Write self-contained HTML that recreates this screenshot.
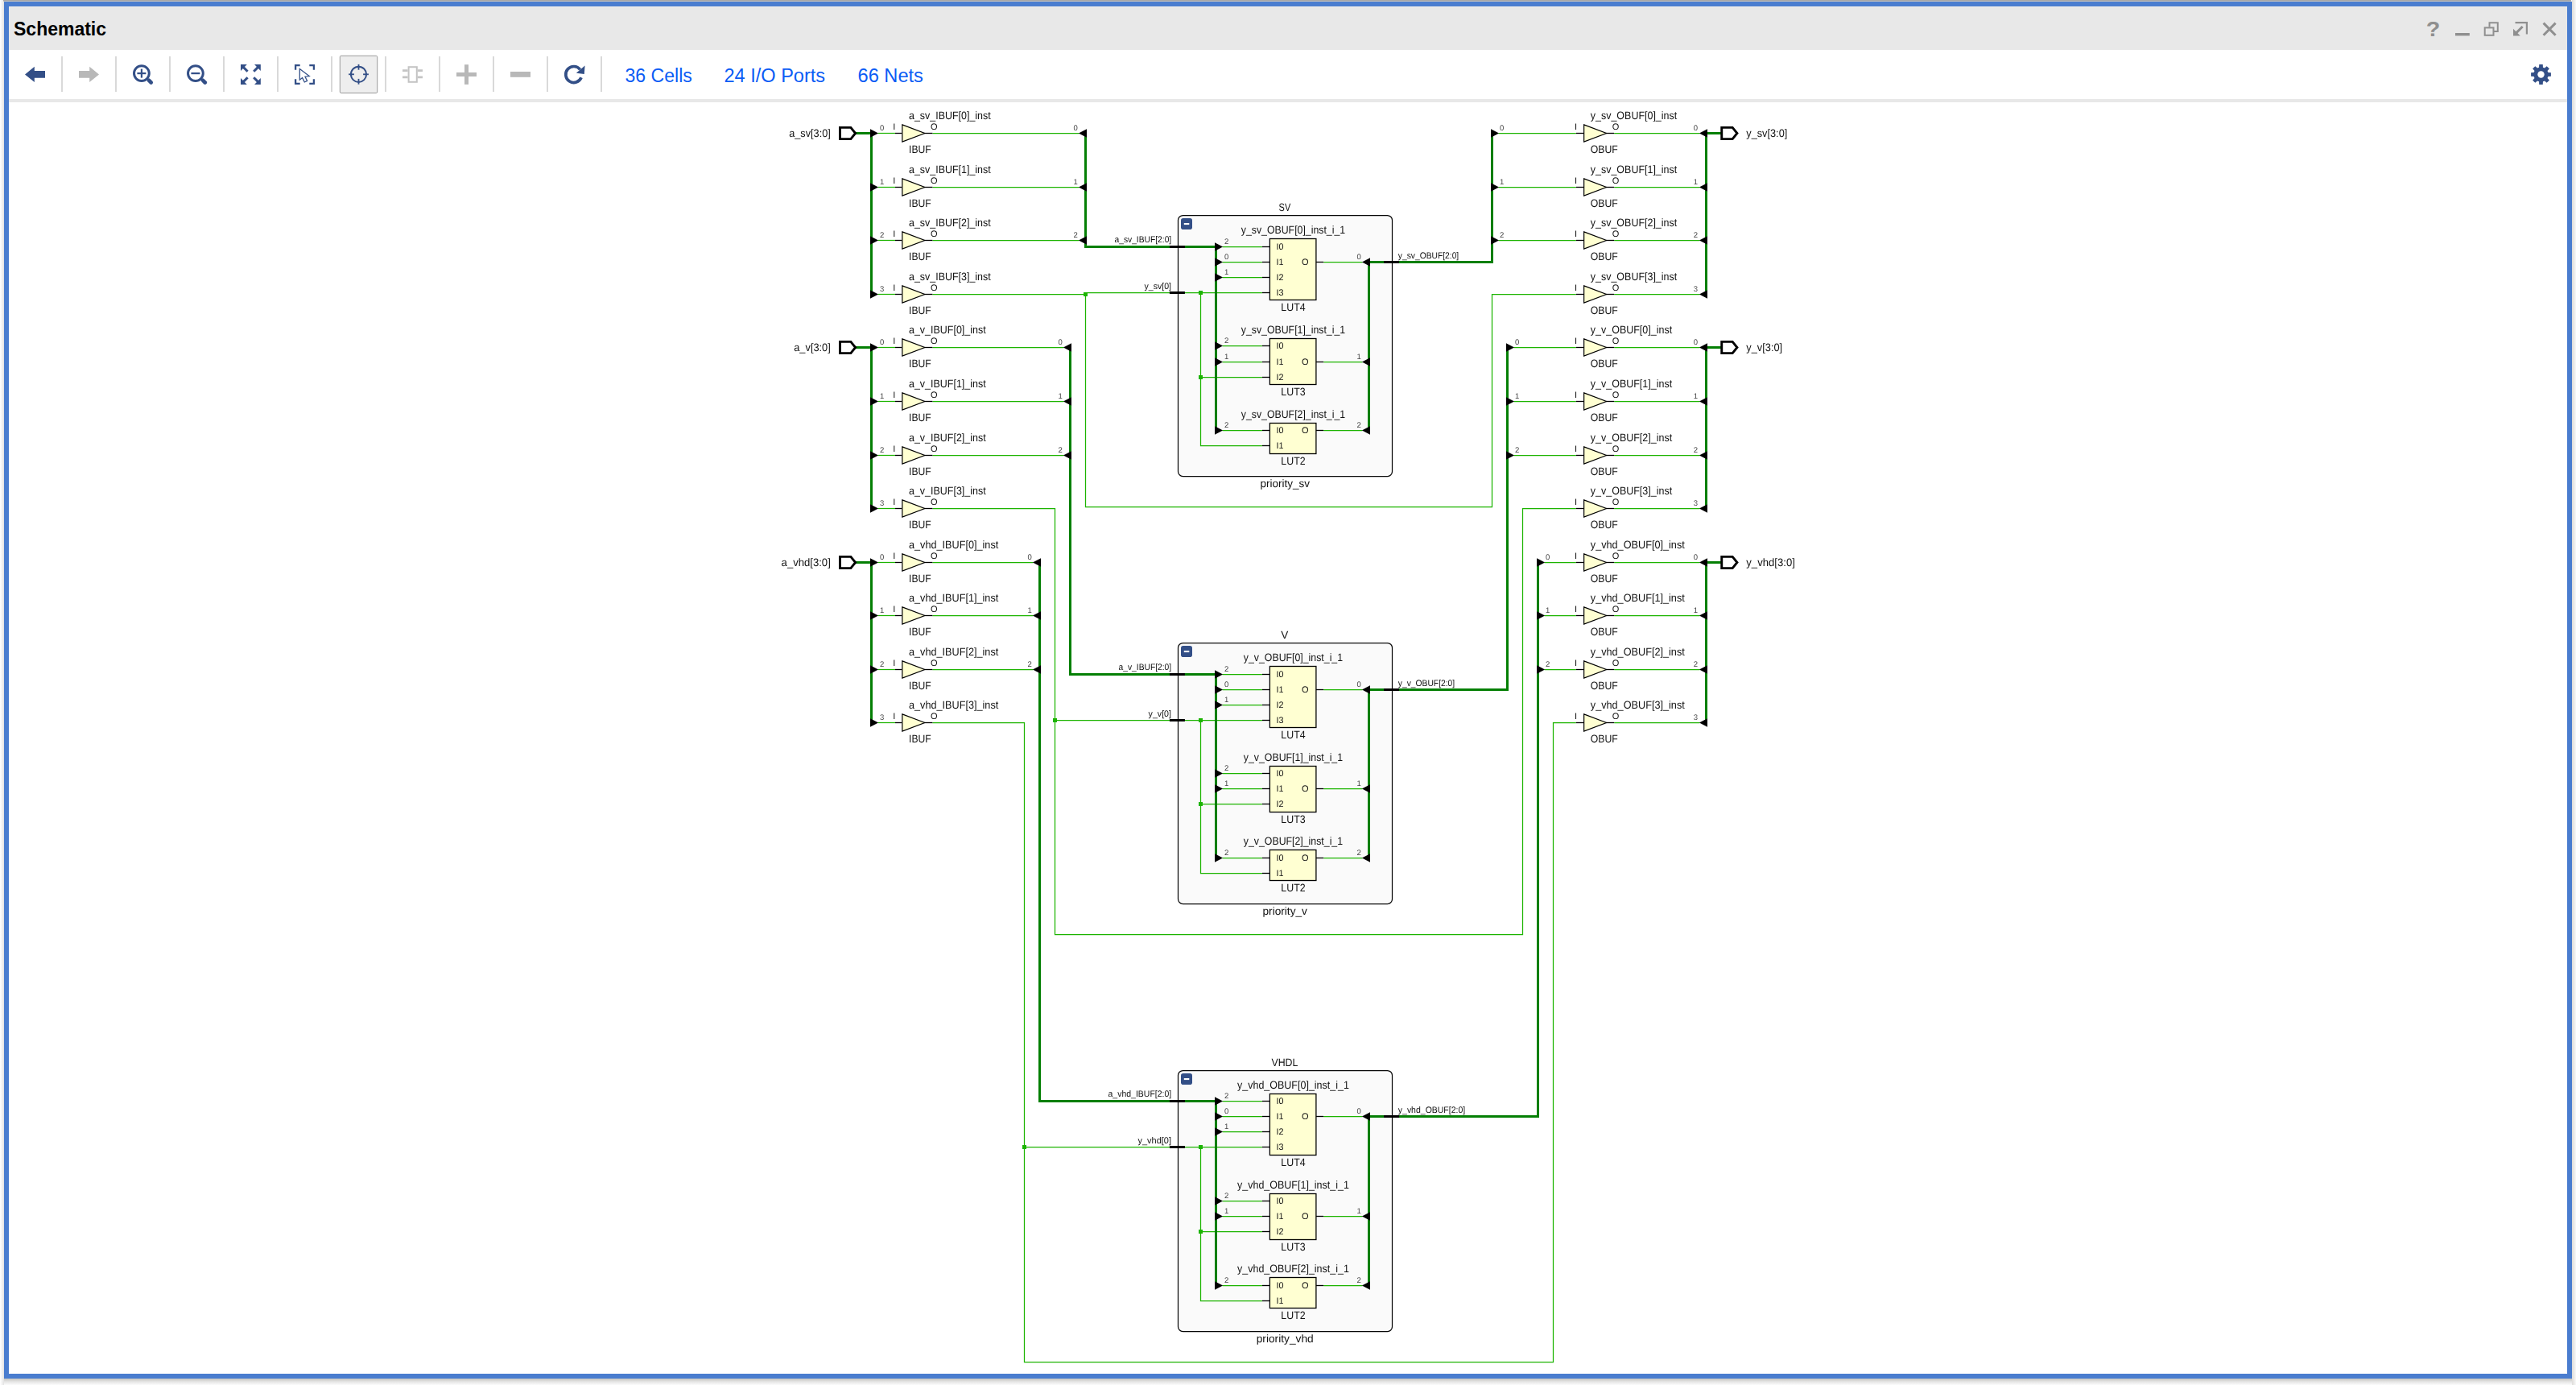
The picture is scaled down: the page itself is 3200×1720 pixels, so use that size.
<!DOCTYPE html>
<html><head><meta charset="utf-8"><title>Schematic</title>
<style>
html,body{margin:0;padding:0;background:#fff;}
body{width:3200px;height:1720px;overflow:hidden;}
svg{display:block;position:absolute;left:0;top:0;}
#sch{will-change:transform;}
#sch text{text-rendering:geometricPrecision;}
svg text{font-family:"Liberation Sans",sans-serif;}
</style></head>
<body>
<svg width="3200" height="1720" viewBox="0 0 3200 1720">
<g id="chrome">
<defs><linearGradient id="gl" x1="0" x2="1" y1="0" y2="0"><stop offset="0" stop-color="#ffffff"/><stop offset="0.5" stop-color="#f2f2f2"/><stop offset="1" stop-color="#e2e2e2"/></linearGradient><linearGradient id="gr" x1="0" x2="1" y1="0" y2="0"><stop offset="0" stop-color="#dedcd9"/><stop offset="1" stop-color="#f8f8f8"/></linearGradient><linearGradient id="gb" x1="0" x2="0" y1="0" y2="1"><stop offset="0" stop-color="#c6c4c0"/><stop offset="0.5" stop-color="#e6e6e6"/><stop offset="1" stop-color="#fbfbfb"/></linearGradient></defs>
<rect x="0" y="0" width="3200" height="1720" fill="#f8f8f8"/>
<rect x="0" y="0" width="5" height="1720" fill="url(#gl)"/>
<rect x="3195" y="0" width="5" height="1720" fill="url(#gr)"/>
<rect x="5" y="1712" width="3190" height="8" fill="url(#gb)"/>
<rect x="4" y="0" width="3190" height="1" fill="#a6a6a6"/>
<rect x="4" y="1" width="3190" height="1" fill="#c4c2bd"/>
<rect x="5" y="2" width="3190" height="1710" fill="#4a7dcf"/>
<rect x="11" y="8" width="3178" height="1698" fill="#ffffff"/>
<rect x="11" y="8" width="3178" height="54" fill="#e8e8e8"/>
<rect x="11" y="8" width="3178" height="1" fill="#f4f1ec"/>
<rect x="11" y="123" width="3178" height="4" fill="#e8e8e8"/>
<text x="17" y="43.5" font-size="23" font-weight="bold" fill="#000">Schematic</text>
<rect x="76.0" y="70" width="2" height="44" fill="#d9d9d9"/>
<rect x="143.0" y="70" width="2" height="44" fill="#d9d9d9"/>
<rect x="210.0" y="70" width="2" height="44" fill="#d9d9d9"/>
<rect x="277.0" y="70" width="2" height="44" fill="#d9d9d9"/>
<rect x="344.0" y="70" width="2" height="44" fill="#d9d9d9"/>
<rect x="411.0" y="70" width="2" height="44" fill="#d9d9d9"/>
<rect x="478.0" y="70" width="2" height="44" fill="#d9d9d9"/>
<rect x="545.0" y="70" width="2" height="44" fill="#d9d9d9"/>
<rect x="612.0" y="70" width="2" height="44" fill="#d9d9d9"/>
<rect x="679.0" y="70" width="2" height="44" fill="#d9d9d9"/>
<rect x="746.0" y="70" width="2" height="44" fill="#d9d9d9"/>
<path d="M31,92.4L42.8,82.80000000000001L42.8,88.0L56,88.0L56,96.80000000000001L42.8,96.80000000000001L42.8,102.0Z" fill="#334f87"/>
<path d="M123,92.4L111.2,82.80000000000001L111.2,88.0L98,88.0L98,96.80000000000001L111.2,96.80000000000001L111.2,102.0Z" fill="#b8b8b8"/>
<circle cx="175.9" cy="91.1" r="9.4" fill="none" stroke="#334f87" stroke-width="3"/>
<path d="M170.4,91.1H181.4" stroke="#334f87" stroke-width="2.2"/>
<path d="M175.9,85.6V96.6" stroke="#334f87" stroke-width="2.2"/>
<path d="M184.9,99.7L187.70000000000002,102.5" stroke="#334f87" stroke-width="4.7" stroke-linecap="round"/>
<path d="M181.9,96.7L184.9,99.7" stroke="#334f87" stroke-width="1.6"/>
<circle cx="242.9" cy="91.1" r="9.4" fill="none" stroke="#334f87" stroke-width="3"/>
<path d="M237.4,91.1H248.4" stroke="#334f87" stroke-width="2.2"/>
<path d="M251.9,99.7L254.70000000000002,102.5" stroke="#334f87" stroke-width="4.7" stroke-linecap="round"/>
<path d="M248.9,96.7L251.9,99.7" stroke="#334f87" stroke-width="1.6"/>
<path d="M299.0,80.1L306.8,80.1L299.0,87.89999999999999Z" fill="#334f87"/>
<path d="M302.0,83.1L307.59999999999997,88.7" stroke="#334f87" stroke-width="3.0"/>
<path d="M323.79999999999995,80.1L315.99999999999994,80.1L323.79999999999995,87.89999999999999Z" fill="#334f87"/>
<path d="M320.79999999999995,83.1L315.2,88.7" stroke="#334f87" stroke-width="3.0"/>
<path d="M299.0,104.9L306.8,104.9L299.0,97.10000000000001Z" fill="#334f87"/>
<path d="M302.0,101.9L307.59999999999997,96.3" stroke="#334f87" stroke-width="3.0"/>
<path d="M323.79999999999995,104.9L315.99999999999994,104.9L323.79999999999995,97.10000000000001Z" fill="#334f87"/>
<path d="M320.79999999999995,101.9L315.2,96.3" stroke="#334f87" stroke-width="3.0"/>
<path d="M372.70000000000005,81.2L367.1,81.2L367.1,86.8" stroke="#334f87" stroke-width="2.3" fill="none"/>
<path d="M384.29999999999995,81.2L389.9,81.2L389.9,86.8" stroke="#334f87" stroke-width="2.3" fill="none"/>
<path d="M372.70000000000005,103.8L367.1,103.8L367.1,98.2" stroke="#334f87" stroke-width="2.3" fill="none"/>
<path d="M384.29999999999995,103.8L389.9,103.8L389.9,98.2" stroke="#334f87" stroke-width="2.3" fill="none"/>
<path d="M372.3,85.6L372.3,99.2L375.6,96.6L378.3,102.0L381.6,100.4L379.0,95.2L384.2,94.6Z" fill="#fff" stroke="#334f87" stroke-width="1.3" stroke-linejoin="miter"/>
<rect x="422.3" y="69.3" width="46.4" height="46.2" rx="1.5" fill="#eeeeee" stroke="#9a9a9a" stroke-width="1"/>
<circle cx="445.5" cy="92.3" r="9.6" fill="none" stroke="#334f87" stroke-width="2"/>
<path d="M445.5,86.7L445.5,79.89999999999999" stroke="#334f87" stroke-width="1.8"/>
<path d="M445.5,97.89999999999999L445.5,104.7" stroke="#334f87" stroke-width="1.8"/>
<path d="M439.9,92.3L433.1,92.3" stroke="#334f87" stroke-width="1.8"/>
<path d="M451.1,92.3L457.9,92.3" stroke="#334f87" stroke-width="1.8"/>
<rect x="507.6" y="83.2" width="10.2" height="18.6" fill="#fff" stroke="#c4c4c4" stroke-width="2"/>
<path d="M500,87.7H506.6M518.8,87.7H525" stroke="#c4c4c4" stroke-width="2.8"/>
<path d="M500,95.9H506.6M518.8,95.9H525" stroke="#c4c4c4" stroke-width="2.8"/>
<rect x="567" y="90" width="25" height="5" fill="#b8b8b8"/><rect x="577" y="80.2" width="5" height="24.7" fill="#b8b8b8"/>
<rect x="634" y="89" width="25" height="6.8" fill="#b8b8b8"/>
<path d="M720.68,86.34A10.0,10.0 0 1 0 722.07,96.25" fill="none" stroke="#334f87" stroke-width="3.7"/>
<path d="M726.6,81.6L725.8,92.0L715.8,90.8Z" fill="#334f87"/>
<text x="776.5" y="101.6" font-size="23" fill="#0b5cf5" textLength="83.3" lengthAdjust="spacingAndGlyphs">36 Cells</text>
<text x="899.5" y="101.6" font-size="23" fill="#0b5cf5" textLength="125.6" lengthAdjust="spacingAndGlyphs">24 I/O Ports</text>
<text x="1065.5" y="101.6" font-size="23" fill="#0b5cf5" textLength="81.4" lengthAdjust="spacingAndGlyphs">66 Nets</text>
<text x="3013.8" y="44.8" font-size="25.5" font-weight="bold" fill="#8f8f8f" textLength="17.5" lengthAdjust="spacingAndGlyphs">?</text>
<rect x="3050" y="41" width="17.8" height="3.4" fill="#8f8f8f"/>
<path d="M3092.5,33.5V28.2H3102.8V39H3097.5" fill="none" stroke="#8f8f8f" stroke-width="2"/>
<rect x="3086.7" y="34.4" width="10.8" height="9.4" fill="none" stroke="#8f8f8f" stroke-width="2"/>
<path d="M3124.5,28.2H3138.9V42.6" fill="none" stroke="#8f8f8f" stroke-width="2.2"/>
<path d="M3122,44.6L3122,35.8L3130.8,44.6Z" fill="#8f8f8f"/>
<path d="M3125,41.6L3133.6,33" stroke="#8f8f8f" stroke-width="3"/>
<path d="M3159.6,28.6L3174.6,43.8M3174.6,28.6L3159.6,43.8" stroke="#8f8f8f" stroke-width="3"/>
<path d="M3154.05,83.63L3154.24,80.10L3158.76,80.10L3158.95,83.63L3161.03,84.50L3163.67,82.14L3166.86,85.33L3164.50,87.97L3165.37,90.05L3168.90,90.24L3168.90,94.76L3165.37,94.95L3164.50,97.03L3166.86,99.67L3163.67,102.86L3161.03,100.50L3158.95,101.37L3158.76,104.90L3154.24,104.90L3154.05,101.37L3151.97,100.50L3149.33,102.86L3146.14,99.67L3148.50,97.03L3147.63,94.95L3144.10,94.76L3144.10,90.24L3147.63,90.05L3148.50,87.97L3146.14,85.33L3149.33,82.14L3151.97,84.50Z" fill="#334f87"/>
<circle cx="3156.5" cy="92.5" r="4.2" fill="#fff"/>
</g>
</svg>
<svg id="sch" width="3200" height="1720" viewBox="0 0 3200 1720">
<g id="schem">
<rect x="1465.3" y="269.30" width="262.40" height="320.4" rx="4.5" ry="4.5" fill="#fafafa"/>
<rect x="1463.5" y="267.50" width="266.00" height="324" rx="6" ry="6" fill="none" stroke="#080808" stroke-width="1.25"/>
<rect x="1465.3" y="800.30" width="262.40" height="320.4" rx="4.5" ry="4.5" fill="#fafafa"/>
<rect x="1463.5" y="798.50" width="266.00" height="324" rx="6" ry="6" fill="none" stroke="#080808" stroke-width="1.25"/>
<rect x="1465.3" y="1331.30" width="262.40" height="320.4" rx="4.5" ry="4.5" fill="#fafafa"/>
<rect x="1463.5" y="1329.50" width="266.00" height="324" rx="6" ry="6" fill="none" stroke="#080808" stroke-width="1.25"/>
<path d="M1090.50,165.50L1112.00,165.50" stroke="#1cb400" stroke-width="1.25" fill="none" stroke-linejoin="miter" stroke-linecap="butt"/>
<path d="M1158.40,165.50L1340.50,165.50" stroke="#1cb400" stroke-width="1.25" fill="none" stroke-linejoin="miter" stroke-linecap="butt"/>
<path d="M1090.50,232.50L1112.00,232.50" stroke="#1cb400" stroke-width="1.25" fill="none" stroke-linejoin="miter" stroke-linecap="butt"/>
<path d="M1158.40,232.50L1340.50,232.50" stroke="#1cb400" stroke-width="1.25" fill="none" stroke-linejoin="miter" stroke-linecap="butt"/>
<path d="M1090.50,298.50L1112.00,298.50" stroke="#1cb400" stroke-width="1.25" fill="none" stroke-linejoin="miter" stroke-linecap="butt"/>
<path d="M1158.40,298.50L1340.50,298.50" stroke="#1cb400" stroke-width="1.25" fill="none" stroke-linejoin="miter" stroke-linecap="butt"/>
<path d="M1090.50,365.50L1112.00,365.50" stroke="#1cb400" stroke-width="1.25" fill="none" stroke-linejoin="miter" stroke-linecap="butt"/>
<path d="M1158.40,365.50L1348.50,365.50" stroke="#1cb400" stroke-width="1.25" fill="none" stroke-linejoin="miter" stroke-linecap="butt"/>
<path d="M1348.50,363.50L1567.90,363.50" stroke="#1cb400" stroke-width="1.25" fill="none" stroke-linejoin="miter" stroke-linecap="butt"/>
<path d="M1348.50,365.50L1348.50,629.50L1853.50,629.50L1853.50,365.50L1957.80,365.50" stroke="#1cb400" stroke-width="1.25" fill="none" stroke-linejoin="miter" stroke-linecap="butt"/>
<rect x="1346.00" y="363.00" width="5" height="5" fill="#1cb400"/>
<path d="M1491.50,363.50L1491.50,553.50L1567.90,553.50" stroke="#1cb400" stroke-width="1.25" fill="none" stroke-linejoin="miter" stroke-linecap="butt"/>
<path d="M1491.50,468.50L1567.90,468.50" stroke="#1cb400" stroke-width="1.25" fill="none" stroke-linejoin="miter" stroke-linecap="butt"/>
<rect x="1489.00" y="361.00" width="5" height="5" fill="#1cb400"/>
<rect x="1489.00" y="466.00" width="5" height="5" fill="#1cb400"/>
<path d="M1518.50,306.50L1567.90,306.50" stroke="#1cb400" stroke-width="1.25" fill="none" stroke-linejoin="miter" stroke-linecap="butt"/>
<path d="M1518.50,325.50L1567.90,325.50" stroke="#1cb400" stroke-width="1.25" fill="none" stroke-linejoin="miter" stroke-linecap="butt"/>
<path d="M1518.50,344.50L1567.90,344.50" stroke="#1cb400" stroke-width="1.25" fill="none" stroke-linejoin="miter" stroke-linecap="butt"/>
<path d="M1518.50,429.50L1567.90,429.50" stroke="#1cb400" stroke-width="1.25" fill="none" stroke-linejoin="miter" stroke-linecap="butt"/>
<path d="M1518.50,449.50L1567.90,449.50" stroke="#1cb400" stroke-width="1.25" fill="none" stroke-linejoin="miter" stroke-linecap="butt"/>
<path d="M1518.50,534.50L1567.90,534.50" stroke="#1cb400" stroke-width="1.25" fill="none" stroke-linejoin="miter" stroke-linecap="butt"/>
<path d="M1644.20,325.50L1692.50,325.50" stroke="#1cb400" stroke-width="1.25" fill="none" stroke-linejoin="miter" stroke-linecap="butt"/>
<path d="M1644.20,449.50L1692.50,449.50" stroke="#1cb400" stroke-width="1.25" fill="none" stroke-linejoin="miter" stroke-linecap="butt"/>
<path d="M1644.20,534.50L1692.50,534.50" stroke="#1cb400" stroke-width="1.25" fill="none" stroke-linejoin="miter" stroke-linecap="butt"/>
<path d="M1861.50,165.50L1957.80,165.50" stroke="#1cb400" stroke-width="1.25" fill="none" stroke-linejoin="miter" stroke-linecap="butt"/>
<path d="M1861.50,232.50L1957.80,232.50" stroke="#1cb400" stroke-width="1.25" fill="none" stroke-linejoin="miter" stroke-linecap="butt"/>
<path d="M1861.50,298.50L1957.80,298.50" stroke="#1cb400" stroke-width="1.25" fill="none" stroke-linejoin="miter" stroke-linecap="butt"/>
<path d="M2005.20,165.50L2111.50,165.50" stroke="#1cb400" stroke-width="1.25" fill="none" stroke-linejoin="miter" stroke-linecap="butt"/>
<path d="M2005.20,232.50L2111.50,232.50" stroke="#1cb400" stroke-width="1.25" fill="none" stroke-linejoin="miter" stroke-linecap="butt"/>
<path d="M2005.20,298.50L2111.50,298.50" stroke="#1cb400" stroke-width="1.25" fill="none" stroke-linejoin="miter" stroke-linecap="butt"/>
<path d="M2005.20,365.50L2111.50,365.50" stroke="#1cb400" stroke-width="1.25" fill="none" stroke-linejoin="miter" stroke-linecap="butt"/>
<path d="M1063.00,165.50L1082.50,165.50" stroke="#047f04" stroke-width="3.0" fill="none" stroke-linejoin="miter" stroke-linecap="butt"/>
<path d="M1082.50,164.00L1082.50,365.50" stroke="#047f04" stroke-width="3.0" fill="none" stroke-linejoin="miter" stroke-linecap="butt"/>
<path d="M1348.50,164.00L1348.50,306.50L1510.50,306.50" stroke="#047f04" stroke-width="3.0" fill="none" stroke-linejoin="miter" stroke-linecap="butt"/>
<path d="M1510.50,305.00L1510.50,534.50" stroke="#047f04" stroke-width="3.0" fill="none" stroke-linejoin="miter" stroke-linecap="butt"/>
<path d="M1700.50,534.50L1700.50,325.50L1853.50,325.50L1853.50,164.00" stroke="#047f04" stroke-width="3.0" fill="none" stroke-linejoin="miter" stroke-linecap="butt"/>
<path d="M2119.50,365.50L2119.50,164.00" stroke="#047f04" stroke-width="3.0" fill="none" stroke-linejoin="miter" stroke-linecap="butt"/>
<path d="M2119.50,165.50L2138.00,165.50" stroke="#047f04" stroke-width="3.0" fill="none" stroke-linejoin="miter" stroke-linecap="butt"/>
<path d="M1452.90,306.50L1471.90,306.50" stroke="#000" stroke-width="3" fill="none"/>
<path d="M1452.90,363.50L1471.90,363.50" stroke="#000" stroke-width="3" fill="none"/>
<path d="M1719.10,325.50L1738.10,325.50" stroke="#000" stroke-width="3" fill="none"/>
<path d="M1081.00,160.25L1091.10,165.50L1081.00,170.75Z" fill="#000"/>
<path d="M2121.00,160.25L2110.90,165.50L2121.00,170.75Z" fill="#000"/>
<text x="1092.90" y="162.00" font-size="9.5" text-anchor="start" fill="#444444">0</text>
<text x="2109.10" y="162.00" font-size="9.5" text-anchor="end" fill="#444444">0</text>
<path d="M1081.00,227.25L1091.10,232.50L1081.00,237.75Z" fill="#000"/>
<path d="M2121.00,227.25L2110.90,232.50L2121.00,237.75Z" fill="#000"/>
<text x="1092.90" y="229.00" font-size="9.5" text-anchor="start" fill="#444444">1</text>
<text x="2109.10" y="229.00" font-size="9.5" text-anchor="end" fill="#444444">1</text>
<path d="M1081.00,293.25L1091.10,298.50L1081.00,303.75Z" fill="#000"/>
<path d="M2121.00,293.25L2110.90,298.50L2121.00,303.75Z" fill="#000"/>
<text x="1092.90" y="295.00" font-size="9.5" text-anchor="start" fill="#444444">2</text>
<text x="2109.10" y="295.00" font-size="9.5" text-anchor="end" fill="#444444">2</text>
<path d="M1081.00,360.25L1091.10,365.50L1081.00,370.75Z" fill="#000"/>
<path d="M2121.00,360.25L2110.90,365.50L2121.00,370.75Z" fill="#000"/>
<text x="1092.90" y="362.00" font-size="9.5" text-anchor="start" fill="#444444">3</text>
<text x="2109.10" y="362.00" font-size="9.5" text-anchor="end" fill="#444444">3</text>
<path d="M1350.00,160.25L1339.90,165.50L1350.00,170.75Z" fill="#000"/>
<text x="1338.90" y="162.00" font-size="9.5" text-anchor="end" fill="#444444">0</text>
<path d="M1852.00,160.25L1862.10,165.50L1852.00,170.75Z" fill="#000"/>
<text x="1862.90" y="162.00" font-size="9.5" text-anchor="start" fill="#444444">0</text>
<path d="M1350.00,227.25L1339.90,232.50L1350.00,237.75Z" fill="#000"/>
<text x="1338.90" y="229.00" font-size="9.5" text-anchor="end" fill="#444444">1</text>
<path d="M1852.00,227.25L1862.10,232.50L1852.00,237.75Z" fill="#000"/>
<text x="1862.90" y="229.00" font-size="9.5" text-anchor="start" fill="#444444">1</text>
<path d="M1350.00,293.25L1339.90,298.50L1350.00,303.75Z" fill="#000"/>
<text x="1338.90" y="295.00" font-size="9.5" text-anchor="end" fill="#444444">2</text>
<path d="M1852.00,293.25L1862.10,298.50L1852.00,303.75Z" fill="#000"/>
<text x="1862.90" y="295.00" font-size="9.5" text-anchor="start" fill="#444444">2</text>
<path d="M1509.00,301.25L1519.10,306.50L1509.00,311.75Z" fill="#000"/>
<text x="1521.00" y="302.90" font-size="9.5" text-anchor="start" fill="#444444">2</text>
<path d="M1509.00,320.25L1519.10,325.50L1509.00,330.75Z" fill="#000"/>
<text x="1521.00" y="321.90" font-size="9.5" text-anchor="start" fill="#444444">0</text>
<path d="M1509.00,339.25L1519.10,344.50L1509.00,349.75Z" fill="#000"/>
<text x="1521.00" y="340.90" font-size="9.5" text-anchor="start" fill="#444444">1</text>
<path d="M1509.00,424.25L1519.10,429.50L1509.00,434.75Z" fill="#000"/>
<text x="1521.00" y="425.90" font-size="9.5" text-anchor="start" fill="#444444">2</text>
<path d="M1509.00,444.25L1519.10,449.50L1509.00,454.75Z" fill="#000"/>
<text x="1521.00" y="445.90" font-size="9.5" text-anchor="start" fill="#444444">1</text>
<path d="M1509.00,529.25L1519.10,534.50L1509.00,539.75Z" fill="#000"/>
<text x="1521.00" y="530.90" font-size="9.5" text-anchor="start" fill="#444444">2</text>
<path d="M1702.00,320.25L1691.90,325.50L1702.00,330.75Z" fill="#000"/>
<text x="1690.70" y="321.90" font-size="9.5" text-anchor="end" fill="#444444">0</text>
<path d="M1702.00,444.25L1691.90,449.50L1702.00,454.75Z" fill="#000"/>
<text x="1690.70" y="445.90" font-size="9.5" text-anchor="end" fill="#444444">1</text>
<path d="M1702.00,529.25L1691.90,534.50L1702.00,539.75Z" fill="#000"/>
<text x="1690.70" y="530.90" font-size="9.5" text-anchor="end" fill="#444444">2</text>
<path d="M1043.45,158.40L1056.85,158.40L1062.65,165.50L1056.85,172.60L1043.45,172.60Z" fill="#fff" stroke="#000" stroke-width="2.9" stroke-linejoin="miter"/>
<text x="1031.80" y="170.10" font-size="13.6" text-anchor="end" fill="#111111" textLength="51.64" lengthAdjust="spacingAndGlyphs">a_sv[3:0]</text>
<path d="M2138.75,158.40L2152.15,158.40L2157.95,165.50L2152.15,172.60L2138.75,172.60Z" fill="#fff" stroke="#000" stroke-width="2.9" stroke-linejoin="miter"/>
<text x="2169.30" y="170.10" font-size="13.6" text-anchor="start" fill="#111111" textLength="50.98" lengthAdjust="spacingAndGlyphs">y_sv[3:0]</text>
<path d="M1112.00,165.50L1120.40,165.50" stroke="#000" stroke-width="1.3" fill="none"/>
<path d="M1148.40,165.50L1158.40,165.50" stroke="#000" stroke-width="1.3" fill="none"/>
<path d="M1120.85,154.90L1148.80,165.50L1120.85,176.10Z" fill="#ffffd2" stroke="#000" stroke-width="1.2" stroke-linejoin="miter"/>
<text x="1109.20" y="160.90" font-size="11.0" text-anchor="start" fill="#111111">I</text>
<text x="1155.90" y="161.00" font-size="11.0" text-anchor="start" fill="#111111">O</text>
<text x="1129.00" y="147.90" font-size="13.6" text-anchor="start" fill="#111111" textLength="101.70" lengthAdjust="spacingAndGlyphs">a_sv_IBUF[0]_inst</text>
<text x="1129.00" y="190.00" font-size="13.6" text-anchor="start" fill="#111111" textLength="27.68" lengthAdjust="spacingAndGlyphs">IBUF</text>
<path d="M1957.80,165.50L1967.20,165.50" stroke="#000" stroke-width="1.3" fill="none"/>
<path d="M1995.20,165.50L2005.20,165.50" stroke="#000" stroke-width="1.3" fill="none"/>
<path d="M1967.65,154.90L1995.60,165.50L1967.65,176.10Z" fill="#ffffd2" stroke="#000" stroke-width="1.2" stroke-linejoin="miter"/>
<text x="1956.00" y="160.90" font-size="11.0" text-anchor="start" fill="#111111">I</text>
<text x="2002.70" y="161.00" font-size="11.0" text-anchor="start" fill="#111111">O</text>
<text x="1975.80" y="147.90" font-size="13.6" text-anchor="start" fill="#111111" textLength="107.41" lengthAdjust="spacingAndGlyphs">y_sv_OBUF[0]_inst</text>
<text x="1975.80" y="190.00" font-size="13.6" text-anchor="start" fill="#111111" textLength="34.05" lengthAdjust="spacingAndGlyphs">OBUF</text>
<path d="M1112.00,232.50L1120.40,232.50" stroke="#000" stroke-width="1.3" fill="none"/>
<path d="M1148.40,232.50L1158.40,232.50" stroke="#000" stroke-width="1.3" fill="none"/>
<path d="M1120.85,221.90L1148.80,232.50L1120.85,243.10Z" fill="#ffffd2" stroke="#000" stroke-width="1.2" stroke-linejoin="miter"/>
<text x="1109.20" y="227.90" font-size="11.0" text-anchor="start" fill="#111111">I</text>
<text x="1155.90" y="228.00" font-size="11.0" text-anchor="start" fill="#111111">O</text>
<text x="1129.00" y="214.90" font-size="13.6" text-anchor="start" fill="#111111" textLength="101.70" lengthAdjust="spacingAndGlyphs">a_sv_IBUF[1]_inst</text>
<text x="1129.00" y="257.00" font-size="13.6" text-anchor="start" fill="#111111" textLength="27.68" lengthAdjust="spacingAndGlyphs">IBUF</text>
<path d="M1957.80,232.50L1967.20,232.50" stroke="#000" stroke-width="1.3" fill="none"/>
<path d="M1995.20,232.50L2005.20,232.50" stroke="#000" stroke-width="1.3" fill="none"/>
<path d="M1967.65,221.90L1995.60,232.50L1967.65,243.10Z" fill="#ffffd2" stroke="#000" stroke-width="1.2" stroke-linejoin="miter"/>
<text x="1956.00" y="227.90" font-size="11.0" text-anchor="start" fill="#111111">I</text>
<text x="2002.70" y="228.00" font-size="11.0" text-anchor="start" fill="#111111">O</text>
<text x="1975.80" y="214.90" font-size="13.6" text-anchor="start" fill="#111111" textLength="107.41" lengthAdjust="spacingAndGlyphs">y_sv_OBUF[1]_inst</text>
<text x="1975.80" y="257.00" font-size="13.6" text-anchor="start" fill="#111111" textLength="34.05" lengthAdjust="spacingAndGlyphs">OBUF</text>
<path d="M1112.00,298.50L1120.40,298.50" stroke="#000" stroke-width="1.3" fill="none"/>
<path d="M1148.40,298.50L1158.40,298.50" stroke="#000" stroke-width="1.3" fill="none"/>
<path d="M1120.85,287.90L1148.80,298.50L1120.85,309.10Z" fill="#ffffd2" stroke="#000" stroke-width="1.2" stroke-linejoin="miter"/>
<text x="1109.20" y="293.90" font-size="11.0" text-anchor="start" fill="#111111">I</text>
<text x="1155.90" y="294.00" font-size="11.0" text-anchor="start" fill="#111111">O</text>
<text x="1129.00" y="280.90" font-size="13.6" text-anchor="start" fill="#111111" textLength="101.70" lengthAdjust="spacingAndGlyphs">a_sv_IBUF[2]_inst</text>
<text x="1129.00" y="323.00" font-size="13.6" text-anchor="start" fill="#111111" textLength="27.68" lengthAdjust="spacingAndGlyphs">IBUF</text>
<path d="M1957.80,298.50L1967.20,298.50" stroke="#000" stroke-width="1.3" fill="none"/>
<path d="M1995.20,298.50L2005.20,298.50" stroke="#000" stroke-width="1.3" fill="none"/>
<path d="M1967.65,287.90L1995.60,298.50L1967.65,309.10Z" fill="#ffffd2" stroke="#000" stroke-width="1.2" stroke-linejoin="miter"/>
<text x="1956.00" y="293.90" font-size="11.0" text-anchor="start" fill="#111111">I</text>
<text x="2002.70" y="294.00" font-size="11.0" text-anchor="start" fill="#111111">O</text>
<text x="1975.80" y="280.90" font-size="13.6" text-anchor="start" fill="#111111" textLength="107.41" lengthAdjust="spacingAndGlyphs">y_sv_OBUF[2]_inst</text>
<text x="1975.80" y="323.00" font-size="13.6" text-anchor="start" fill="#111111" textLength="34.05" lengthAdjust="spacingAndGlyphs">OBUF</text>
<path d="M1112.00,365.50L1120.40,365.50" stroke="#000" stroke-width="1.3" fill="none"/>
<path d="M1148.40,365.50L1158.40,365.50" stroke="#000" stroke-width="1.3" fill="none"/>
<path d="M1120.85,354.90L1148.80,365.50L1120.85,376.10Z" fill="#ffffd2" stroke="#000" stroke-width="1.2" stroke-linejoin="miter"/>
<text x="1109.20" y="360.90" font-size="11.0" text-anchor="start" fill="#111111">I</text>
<text x="1155.90" y="361.00" font-size="11.0" text-anchor="start" fill="#111111">O</text>
<text x="1129.00" y="347.90" font-size="13.6" text-anchor="start" fill="#111111" textLength="101.70" lengthAdjust="spacingAndGlyphs">a_sv_IBUF[3]_inst</text>
<text x="1129.00" y="390.00" font-size="13.6" text-anchor="start" fill="#111111" textLength="27.68" lengthAdjust="spacingAndGlyphs">IBUF</text>
<path d="M1957.80,365.50L1967.20,365.50" stroke="#000" stroke-width="1.3" fill="none"/>
<path d="M1995.20,365.50L2005.20,365.50" stroke="#000" stroke-width="1.3" fill="none"/>
<path d="M1967.65,354.90L1995.60,365.50L1967.65,376.10Z" fill="#ffffd2" stroke="#000" stroke-width="1.2" stroke-linejoin="miter"/>
<text x="1956.00" y="360.90" font-size="11.0" text-anchor="start" fill="#111111">I</text>
<text x="2002.70" y="361.00" font-size="11.0" text-anchor="start" fill="#111111">O</text>
<text x="1975.80" y="347.90" font-size="13.6" text-anchor="start" fill="#111111" textLength="107.41" lengthAdjust="spacingAndGlyphs">y_sv_OBUF[3]_inst</text>
<text x="1975.80" y="390.00" font-size="13.6" text-anchor="start" fill="#111111" textLength="34.05" lengthAdjust="spacingAndGlyphs">OBUF</text>
<rect x="1577.40" y="296.50" width="57.50" height="76.00" fill="#ffffd2" stroke="#000" stroke-width="1.3"/>
<path d="M1567.90,306.50L1577.40,306.50" stroke="#000" stroke-width="1.3" fill="none"/>
<text x="1585.60" y="310.20" font-size="11.0" text-anchor="start" fill="#111111" textLength="9.02" lengthAdjust="spacingAndGlyphs">I0</text>
<path d="M1567.90,325.50L1577.40,325.50" stroke="#000" stroke-width="1.3" fill="none"/>
<text x="1585.60" y="329.20" font-size="11.0" text-anchor="start" fill="#111111" textLength="9.02" lengthAdjust="spacingAndGlyphs">I1</text>
<path d="M1567.90,344.50L1577.40,344.50" stroke="#000" stroke-width="1.3" fill="none"/>
<text x="1585.60" y="348.20" font-size="11.0" text-anchor="start" fill="#111111" textLength="9.02" lengthAdjust="spacingAndGlyphs">I2</text>
<path d="M1567.90,363.50L1577.40,363.50" stroke="#000" stroke-width="1.3" fill="none"/>
<text x="1585.60" y="367.20" font-size="11.0" text-anchor="start" fill="#111111" textLength="9.02" lengthAdjust="spacingAndGlyphs">I3</text>
<path d="M1634.90,325.50L1644.20,325.50" stroke="#000" stroke-width="1.3" fill="none"/>
<text x="1625.60" y="329.20" font-size="11.0" text-anchor="end" fill="#111111">O</text>
<text x="1606.45" y="289.70" font-size="13.6" text-anchor="middle" fill="#111111" textLength="129.36" lengthAdjust="spacingAndGlyphs">y_sv_OBUF[0]_inst_i_1</text>
<text x="1606.45" y="385.90" font-size="13.6" text-anchor="middle" fill="#111111" textLength="30.24" lengthAdjust="spacingAndGlyphs">LUT4</text>
<rect x="1577.40" y="420.50" width="57.50" height="57.00" fill="#ffffd2" stroke="#000" stroke-width="1.3"/>
<path d="M1567.90,429.50L1577.40,429.50" stroke="#000" stroke-width="1.3" fill="none"/>
<text x="1585.60" y="433.20" font-size="11.0" text-anchor="start" fill="#111111" textLength="9.02" lengthAdjust="spacingAndGlyphs">I0</text>
<path d="M1567.90,449.50L1577.40,449.50" stroke="#000" stroke-width="1.3" fill="none"/>
<text x="1585.60" y="453.20" font-size="11.0" text-anchor="start" fill="#111111" textLength="9.02" lengthAdjust="spacingAndGlyphs">I1</text>
<path d="M1567.90,468.50L1577.40,468.50" stroke="#000" stroke-width="1.3" fill="none"/>
<text x="1585.60" y="472.20" font-size="11.0" text-anchor="start" fill="#111111" textLength="9.02" lengthAdjust="spacingAndGlyphs">I2</text>
<path d="M1634.90,449.50L1644.20,449.50" stroke="#000" stroke-width="1.3" fill="none"/>
<text x="1625.60" y="453.20" font-size="11.0" text-anchor="end" fill="#111111">O</text>
<text x="1606.45" y="413.70" font-size="13.6" text-anchor="middle" fill="#111111" textLength="129.36" lengthAdjust="spacingAndGlyphs">y_sv_OBUF[1]_inst_i_1</text>
<text x="1606.45" y="490.90" font-size="13.6" text-anchor="middle" fill="#111111" textLength="30.24" lengthAdjust="spacingAndGlyphs">LUT3</text>
<rect x="1577.40" y="525.50" width="57.50" height="38.00" fill="#ffffd2" stroke="#000" stroke-width="1.3"/>
<path d="M1567.90,534.50L1577.40,534.50" stroke="#000" stroke-width="1.3" fill="none"/>
<text x="1585.60" y="538.20" font-size="11.0" text-anchor="start" fill="#111111" textLength="9.02" lengthAdjust="spacingAndGlyphs">I0</text>
<path d="M1567.90,553.50L1577.40,553.50" stroke="#000" stroke-width="1.3" fill="none"/>
<text x="1585.60" y="557.20" font-size="11.0" text-anchor="start" fill="#111111" textLength="9.02" lengthAdjust="spacingAndGlyphs">I1</text>
<path d="M1634.90,534.50L1644.20,534.50" stroke="#000" stroke-width="1.3" fill="none"/>
<text x="1625.60" y="538.20" font-size="11.0" text-anchor="end" fill="#111111">O</text>
<text x="1606.45" y="518.70" font-size="13.6" text-anchor="middle" fill="#111111" textLength="129.36" lengthAdjust="spacingAndGlyphs">y_sv_OBUF[2]_inst_i_1</text>
<text x="1606.45" y="576.90" font-size="13.6" text-anchor="middle" fill="#111111" textLength="30.24" lengthAdjust="spacingAndGlyphs">LUT2</text>
<text x="1595.90" y="261.80" font-size="13.6" text-anchor="middle" fill="#111111" textLength="14.59" lengthAdjust="spacingAndGlyphs">SV</text>
<text x="1596.20" y="604.80" font-size="13.6" text-anchor="middle" fill="#111111" textLength="61.48" lengthAdjust="spacingAndGlyphs">priority_sv</text>
<rect x="1467.00" y="271.00" width="14" height="14" rx="2.8" fill="#334f87"/>
<rect x="1470.80" y="277.00" width="6.5" height="2.1" fill="#fff"/>
<text x="1455.20" y="301.10" font-size="11.0" text-anchor="end" fill="#111111" textLength="70.70" lengthAdjust="spacingAndGlyphs">a_sv_IBUF[2:0]</text>
<text x="1455.00" y="358.80" font-size="11.0" text-anchor="end" fill="#111111" textLength="33.50" lengthAdjust="spacingAndGlyphs">y_sv[0]</text>
<text x="1736.80" y="320.80" font-size="11.0" text-anchor="start" fill="#111111" textLength="75.44" lengthAdjust="spacingAndGlyphs">y_sv_OBUF[2:0]</text>
<path d="M1090.50,431.50L1112.00,431.50" stroke="#1cb400" stroke-width="1.25" fill="none" stroke-linejoin="miter" stroke-linecap="butt"/>
<path d="M1158.40,431.50L1321.50,431.50" stroke="#1cb400" stroke-width="1.25" fill="none" stroke-linejoin="miter" stroke-linecap="butt"/>
<path d="M1090.50,498.50L1112.00,498.50" stroke="#1cb400" stroke-width="1.25" fill="none" stroke-linejoin="miter" stroke-linecap="butt"/>
<path d="M1158.40,498.50L1321.50,498.50" stroke="#1cb400" stroke-width="1.25" fill="none" stroke-linejoin="miter" stroke-linecap="butt"/>
<path d="M1090.50,565.50L1112.00,565.50" stroke="#1cb400" stroke-width="1.25" fill="none" stroke-linejoin="miter" stroke-linecap="butt"/>
<path d="M1158.40,565.50L1321.50,565.50" stroke="#1cb400" stroke-width="1.25" fill="none" stroke-linejoin="miter" stroke-linecap="butt"/>
<path d="M1090.50,631.50L1112.00,631.50" stroke="#1cb400" stroke-width="1.25" fill="none" stroke-linejoin="miter" stroke-linecap="butt"/>
<path d="M1158.40,631.50L1310.50,631.50L1310.50,1160.50L1891.50,1160.50L1891.50,631.50L1957.80,631.50" stroke="#1cb400" stroke-width="1.25" fill="none" stroke-linejoin="miter" stroke-linecap="butt"/>
<path d="M1310.50,894.50L1567.90,894.50" stroke="#1cb400" stroke-width="1.25" fill="none" stroke-linejoin="miter" stroke-linecap="butt"/>
<rect x="1308.00" y="892.00" width="5" height="5" fill="#1cb400"/>
<path d="M1491.50,894.50L1491.50,1084.50L1567.90,1084.50" stroke="#1cb400" stroke-width="1.25" fill="none" stroke-linejoin="miter" stroke-linecap="butt"/>
<path d="M1491.50,998.50L1567.90,998.50" stroke="#1cb400" stroke-width="1.25" fill="none" stroke-linejoin="miter" stroke-linecap="butt"/>
<rect x="1489.00" y="892.00" width="5" height="5" fill="#1cb400"/>
<rect x="1489.00" y="996.00" width="5" height="5" fill="#1cb400"/>
<path d="M1518.50,837.50L1567.90,837.50" stroke="#1cb400" stroke-width="1.25" fill="none" stroke-linejoin="miter" stroke-linecap="butt"/>
<path d="M1518.50,856.50L1567.90,856.50" stroke="#1cb400" stroke-width="1.25" fill="none" stroke-linejoin="miter" stroke-linecap="butt"/>
<path d="M1518.50,875.50L1567.90,875.50" stroke="#1cb400" stroke-width="1.25" fill="none" stroke-linejoin="miter" stroke-linecap="butt"/>
<path d="M1518.50,960.50L1567.90,960.50" stroke="#1cb400" stroke-width="1.25" fill="none" stroke-linejoin="miter" stroke-linecap="butt"/>
<path d="M1518.50,979.50L1567.90,979.50" stroke="#1cb400" stroke-width="1.25" fill="none" stroke-linejoin="miter" stroke-linecap="butt"/>
<path d="M1518.50,1065.50L1567.90,1065.50" stroke="#1cb400" stroke-width="1.25" fill="none" stroke-linejoin="miter" stroke-linecap="butt"/>
<path d="M1644.20,856.50L1692.50,856.50" stroke="#1cb400" stroke-width="1.25" fill="none" stroke-linejoin="miter" stroke-linecap="butt"/>
<path d="M1644.20,979.50L1692.50,979.50" stroke="#1cb400" stroke-width="1.25" fill="none" stroke-linejoin="miter" stroke-linecap="butt"/>
<path d="M1644.20,1065.50L1692.50,1065.50" stroke="#1cb400" stroke-width="1.25" fill="none" stroke-linejoin="miter" stroke-linecap="butt"/>
<path d="M1880.50,431.50L1957.80,431.50" stroke="#1cb400" stroke-width="1.25" fill="none" stroke-linejoin="miter" stroke-linecap="butt"/>
<path d="M1880.50,498.50L1957.80,498.50" stroke="#1cb400" stroke-width="1.25" fill="none" stroke-linejoin="miter" stroke-linecap="butt"/>
<path d="M1880.50,565.50L1957.80,565.50" stroke="#1cb400" stroke-width="1.25" fill="none" stroke-linejoin="miter" stroke-linecap="butt"/>
<path d="M2005.20,431.50L2111.50,431.50" stroke="#1cb400" stroke-width="1.25" fill="none" stroke-linejoin="miter" stroke-linecap="butt"/>
<path d="M2005.20,498.50L2111.50,498.50" stroke="#1cb400" stroke-width="1.25" fill="none" stroke-linejoin="miter" stroke-linecap="butt"/>
<path d="M2005.20,565.50L2111.50,565.50" stroke="#1cb400" stroke-width="1.25" fill="none" stroke-linejoin="miter" stroke-linecap="butt"/>
<path d="M2005.20,631.50L2111.50,631.50" stroke="#1cb400" stroke-width="1.25" fill="none" stroke-linejoin="miter" stroke-linecap="butt"/>
<path d="M1063.00,431.50L1082.50,431.50" stroke="#047f04" stroke-width="3.0" fill="none" stroke-linejoin="miter" stroke-linecap="butt"/>
<path d="M1082.50,430.00L1082.50,631.50" stroke="#047f04" stroke-width="3.0" fill="none" stroke-linejoin="miter" stroke-linecap="butt"/>
<path d="M1329.50,430.00L1329.50,837.50L1510.50,837.50" stroke="#047f04" stroke-width="3.0" fill="none" stroke-linejoin="miter" stroke-linecap="butt"/>
<path d="M1510.50,836.00L1510.50,1065.50" stroke="#047f04" stroke-width="3.0" fill="none" stroke-linejoin="miter" stroke-linecap="butt"/>
<path d="M1700.50,1065.50L1700.50,856.50L1872.50,856.50L1872.50,430.00" stroke="#047f04" stroke-width="3.0" fill="none" stroke-linejoin="miter" stroke-linecap="butt"/>
<path d="M2119.50,631.50L2119.50,430.00" stroke="#047f04" stroke-width="3.0" fill="none" stroke-linejoin="miter" stroke-linecap="butt"/>
<path d="M2119.50,431.50L2138.00,431.50" stroke="#047f04" stroke-width="3.0" fill="none" stroke-linejoin="miter" stroke-linecap="butt"/>
<path d="M1452.90,837.50L1471.90,837.50" stroke="#000" stroke-width="3" fill="none"/>
<path d="M1452.90,894.50L1471.90,894.50" stroke="#000" stroke-width="3" fill="none"/>
<path d="M1719.10,856.50L1738.10,856.50" stroke="#000" stroke-width="3" fill="none"/>
<path d="M1081.00,426.25L1091.10,431.50L1081.00,436.75Z" fill="#000"/>
<path d="M2121.00,426.25L2110.90,431.50L2121.00,436.75Z" fill="#000"/>
<text x="1092.90" y="428.00" font-size="9.5" text-anchor="start" fill="#444444">0</text>
<text x="2109.10" y="428.00" font-size="9.5" text-anchor="end" fill="#444444">0</text>
<path d="M1081.00,493.25L1091.10,498.50L1081.00,503.75Z" fill="#000"/>
<path d="M2121.00,493.25L2110.90,498.50L2121.00,503.75Z" fill="#000"/>
<text x="1092.90" y="495.00" font-size="9.5" text-anchor="start" fill="#444444">1</text>
<text x="2109.10" y="495.00" font-size="9.5" text-anchor="end" fill="#444444">1</text>
<path d="M1081.00,560.25L1091.10,565.50L1081.00,570.75Z" fill="#000"/>
<path d="M2121.00,560.25L2110.90,565.50L2121.00,570.75Z" fill="#000"/>
<text x="1092.90" y="562.00" font-size="9.5" text-anchor="start" fill="#444444">2</text>
<text x="2109.10" y="562.00" font-size="9.5" text-anchor="end" fill="#444444">2</text>
<path d="M1081.00,626.25L1091.10,631.50L1081.00,636.75Z" fill="#000"/>
<path d="M2121.00,626.25L2110.90,631.50L2121.00,636.75Z" fill="#000"/>
<text x="1092.90" y="628.00" font-size="9.5" text-anchor="start" fill="#444444">3</text>
<text x="2109.10" y="628.00" font-size="9.5" text-anchor="end" fill="#444444">3</text>
<path d="M1331.00,426.25L1320.90,431.50L1331.00,436.75Z" fill="#000"/>
<text x="1319.90" y="428.00" font-size="9.5" text-anchor="end" fill="#444444">0</text>
<path d="M1871.00,426.25L1881.10,431.50L1871.00,436.75Z" fill="#000"/>
<text x="1881.90" y="428.00" font-size="9.5" text-anchor="start" fill="#444444">0</text>
<path d="M1331.00,493.25L1320.90,498.50L1331.00,503.75Z" fill="#000"/>
<text x="1319.90" y="495.00" font-size="9.5" text-anchor="end" fill="#444444">1</text>
<path d="M1871.00,493.25L1881.10,498.50L1871.00,503.75Z" fill="#000"/>
<text x="1881.90" y="495.00" font-size="9.5" text-anchor="start" fill="#444444">1</text>
<path d="M1331.00,560.25L1320.90,565.50L1331.00,570.75Z" fill="#000"/>
<text x="1319.90" y="562.00" font-size="9.5" text-anchor="end" fill="#444444">2</text>
<path d="M1871.00,560.25L1881.10,565.50L1871.00,570.75Z" fill="#000"/>
<text x="1881.90" y="562.00" font-size="9.5" text-anchor="start" fill="#444444">2</text>
<path d="M1509.00,832.25L1519.10,837.50L1509.00,842.75Z" fill="#000"/>
<text x="1521.00" y="833.90" font-size="9.5" text-anchor="start" fill="#444444">2</text>
<path d="M1509.00,851.25L1519.10,856.50L1509.00,861.75Z" fill="#000"/>
<text x="1521.00" y="852.90" font-size="9.5" text-anchor="start" fill="#444444">0</text>
<path d="M1509.00,870.25L1519.10,875.50L1509.00,880.75Z" fill="#000"/>
<text x="1521.00" y="871.90" font-size="9.5" text-anchor="start" fill="#444444">1</text>
<path d="M1509.00,955.25L1519.10,960.50L1509.00,965.75Z" fill="#000"/>
<text x="1521.00" y="956.90" font-size="9.5" text-anchor="start" fill="#444444">2</text>
<path d="M1509.00,974.25L1519.10,979.50L1509.00,984.75Z" fill="#000"/>
<text x="1521.00" y="975.90" font-size="9.5" text-anchor="start" fill="#444444">1</text>
<path d="M1509.00,1060.25L1519.10,1065.50L1509.00,1070.75Z" fill="#000"/>
<text x="1521.00" y="1061.90" font-size="9.5" text-anchor="start" fill="#444444">2</text>
<path d="M1702.00,851.25L1691.90,856.50L1702.00,861.75Z" fill="#000"/>
<text x="1690.70" y="852.90" font-size="9.5" text-anchor="end" fill="#444444">0</text>
<path d="M1702.00,974.25L1691.90,979.50L1702.00,984.75Z" fill="#000"/>
<text x="1690.70" y="975.90" font-size="9.5" text-anchor="end" fill="#444444">1</text>
<path d="M1702.00,1060.25L1691.90,1065.50L1702.00,1070.75Z" fill="#000"/>
<text x="1690.70" y="1061.90" font-size="9.5" text-anchor="end" fill="#444444">2</text>
<path d="M1043.45,424.40L1056.85,424.40L1062.65,431.50L1056.85,438.60L1043.45,438.60Z" fill="#fff" stroke="#000" stroke-width="2.9" stroke-linejoin="miter"/>
<text x="1031.80" y="436.10" font-size="13.6" text-anchor="end" fill="#111111" textLength="45.56" lengthAdjust="spacingAndGlyphs">a_v[3:0]</text>
<path d="M2138.75,424.40L2152.15,424.40L2157.95,431.50L2152.15,438.60L2138.75,438.60Z" fill="#fff" stroke="#000" stroke-width="2.9" stroke-linejoin="miter"/>
<text x="2169.30" y="436.10" font-size="13.6" text-anchor="start" fill="#111111" textLength="44.89" lengthAdjust="spacingAndGlyphs">y_v[3:0]</text>
<path d="M1112.00,431.50L1120.40,431.50" stroke="#000" stroke-width="1.3" fill="none"/>
<path d="M1148.40,431.50L1158.40,431.50" stroke="#000" stroke-width="1.3" fill="none"/>
<path d="M1120.85,420.90L1148.80,431.50L1120.85,442.10Z" fill="#ffffd2" stroke="#000" stroke-width="1.2" stroke-linejoin="miter"/>
<text x="1109.20" y="426.90" font-size="11.0" text-anchor="start" fill="#111111">I</text>
<text x="1155.90" y="427.00" font-size="11.0" text-anchor="start" fill="#111111">O</text>
<text x="1129.00" y="413.90" font-size="13.6" text-anchor="start" fill="#111111" textLength="95.62" lengthAdjust="spacingAndGlyphs">a_v_IBUF[0]_inst</text>
<text x="1129.00" y="456.00" font-size="13.6" text-anchor="start" fill="#111111" textLength="27.68" lengthAdjust="spacingAndGlyphs">IBUF</text>
<path d="M1957.80,431.50L1967.20,431.50" stroke="#000" stroke-width="1.3" fill="none"/>
<path d="M1995.20,431.50L2005.20,431.50" stroke="#000" stroke-width="1.3" fill="none"/>
<path d="M1967.65,420.90L1995.60,431.50L1967.65,442.10Z" fill="#ffffd2" stroke="#000" stroke-width="1.2" stroke-linejoin="miter"/>
<text x="1956.00" y="426.90" font-size="11.0" text-anchor="start" fill="#111111">I</text>
<text x="2002.70" y="427.00" font-size="11.0" text-anchor="start" fill="#111111">O</text>
<text x="1975.80" y="413.90" font-size="13.6" text-anchor="start" fill="#111111" textLength="101.33" lengthAdjust="spacingAndGlyphs">y_v_OBUF[0]_inst</text>
<text x="1975.80" y="456.00" font-size="13.6" text-anchor="start" fill="#111111" textLength="34.05" lengthAdjust="spacingAndGlyphs">OBUF</text>
<path d="M1112.00,498.50L1120.40,498.50" stroke="#000" stroke-width="1.3" fill="none"/>
<path d="M1148.40,498.50L1158.40,498.50" stroke="#000" stroke-width="1.3" fill="none"/>
<path d="M1120.85,487.90L1148.80,498.50L1120.85,509.10Z" fill="#ffffd2" stroke="#000" stroke-width="1.2" stroke-linejoin="miter"/>
<text x="1109.20" y="493.90" font-size="11.0" text-anchor="start" fill="#111111">I</text>
<text x="1155.90" y="494.00" font-size="11.0" text-anchor="start" fill="#111111">O</text>
<text x="1129.00" y="480.90" font-size="13.6" text-anchor="start" fill="#111111" textLength="95.62" lengthAdjust="spacingAndGlyphs">a_v_IBUF[1]_inst</text>
<text x="1129.00" y="523.00" font-size="13.6" text-anchor="start" fill="#111111" textLength="27.68" lengthAdjust="spacingAndGlyphs">IBUF</text>
<path d="M1957.80,498.50L1967.20,498.50" stroke="#000" stroke-width="1.3" fill="none"/>
<path d="M1995.20,498.50L2005.20,498.50" stroke="#000" stroke-width="1.3" fill="none"/>
<path d="M1967.65,487.90L1995.60,498.50L1967.65,509.10Z" fill="#ffffd2" stroke="#000" stroke-width="1.2" stroke-linejoin="miter"/>
<text x="1956.00" y="493.90" font-size="11.0" text-anchor="start" fill="#111111">I</text>
<text x="2002.70" y="494.00" font-size="11.0" text-anchor="start" fill="#111111">O</text>
<text x="1975.80" y="480.90" font-size="13.6" text-anchor="start" fill="#111111" textLength="101.33" lengthAdjust="spacingAndGlyphs">y_v_OBUF[1]_inst</text>
<text x="1975.80" y="523.00" font-size="13.6" text-anchor="start" fill="#111111" textLength="34.05" lengthAdjust="spacingAndGlyphs">OBUF</text>
<path d="M1112.00,565.50L1120.40,565.50" stroke="#000" stroke-width="1.3" fill="none"/>
<path d="M1148.40,565.50L1158.40,565.50" stroke="#000" stroke-width="1.3" fill="none"/>
<path d="M1120.85,554.90L1148.80,565.50L1120.85,576.10Z" fill="#ffffd2" stroke="#000" stroke-width="1.2" stroke-linejoin="miter"/>
<text x="1109.20" y="560.90" font-size="11.0" text-anchor="start" fill="#111111">I</text>
<text x="1155.90" y="561.00" font-size="11.0" text-anchor="start" fill="#111111">O</text>
<text x="1129.00" y="547.90" font-size="13.6" text-anchor="start" fill="#111111" textLength="95.62" lengthAdjust="spacingAndGlyphs">a_v_IBUF[2]_inst</text>
<text x="1129.00" y="590.00" font-size="13.6" text-anchor="start" fill="#111111" textLength="27.68" lengthAdjust="spacingAndGlyphs">IBUF</text>
<path d="M1957.80,565.50L1967.20,565.50" stroke="#000" stroke-width="1.3" fill="none"/>
<path d="M1995.20,565.50L2005.20,565.50" stroke="#000" stroke-width="1.3" fill="none"/>
<path d="M1967.65,554.90L1995.60,565.50L1967.65,576.10Z" fill="#ffffd2" stroke="#000" stroke-width="1.2" stroke-linejoin="miter"/>
<text x="1956.00" y="560.90" font-size="11.0" text-anchor="start" fill="#111111">I</text>
<text x="2002.70" y="561.00" font-size="11.0" text-anchor="start" fill="#111111">O</text>
<text x="1975.80" y="547.90" font-size="13.6" text-anchor="start" fill="#111111" textLength="101.33" lengthAdjust="spacingAndGlyphs">y_v_OBUF[2]_inst</text>
<text x="1975.80" y="590.00" font-size="13.6" text-anchor="start" fill="#111111" textLength="34.05" lengthAdjust="spacingAndGlyphs">OBUF</text>
<path d="M1112.00,631.50L1120.40,631.50" stroke="#000" stroke-width="1.3" fill="none"/>
<path d="M1148.40,631.50L1158.40,631.50" stroke="#000" stroke-width="1.3" fill="none"/>
<path d="M1120.85,620.90L1148.80,631.50L1120.85,642.10Z" fill="#ffffd2" stroke="#000" stroke-width="1.2" stroke-linejoin="miter"/>
<text x="1109.20" y="626.90" font-size="11.0" text-anchor="start" fill="#111111">I</text>
<text x="1155.90" y="627.00" font-size="11.0" text-anchor="start" fill="#111111">O</text>
<text x="1129.00" y="613.90" font-size="13.6" text-anchor="start" fill="#111111" textLength="95.62" lengthAdjust="spacingAndGlyphs">a_v_IBUF[3]_inst</text>
<text x="1129.00" y="656.00" font-size="13.6" text-anchor="start" fill="#111111" textLength="27.68" lengthAdjust="spacingAndGlyphs">IBUF</text>
<path d="M1957.80,631.50L1967.20,631.50" stroke="#000" stroke-width="1.3" fill="none"/>
<path d="M1995.20,631.50L2005.20,631.50" stroke="#000" stroke-width="1.3" fill="none"/>
<path d="M1967.65,620.90L1995.60,631.50L1967.65,642.10Z" fill="#ffffd2" stroke="#000" stroke-width="1.2" stroke-linejoin="miter"/>
<text x="1956.00" y="626.90" font-size="11.0" text-anchor="start" fill="#111111">I</text>
<text x="2002.70" y="627.00" font-size="11.0" text-anchor="start" fill="#111111">O</text>
<text x="1975.80" y="613.90" font-size="13.6" text-anchor="start" fill="#111111" textLength="101.33" lengthAdjust="spacingAndGlyphs">y_v_OBUF[3]_inst</text>
<text x="1975.80" y="656.00" font-size="13.6" text-anchor="start" fill="#111111" textLength="34.05" lengthAdjust="spacingAndGlyphs">OBUF</text>
<rect x="1577.40" y="827.50" width="57.50" height="76.00" fill="#ffffd2" stroke="#000" stroke-width="1.3"/>
<path d="M1567.90,837.50L1577.40,837.50" stroke="#000" stroke-width="1.3" fill="none"/>
<text x="1585.60" y="841.20" font-size="11.0" text-anchor="start" fill="#111111" textLength="9.02" lengthAdjust="spacingAndGlyphs">I0</text>
<path d="M1567.90,856.50L1577.40,856.50" stroke="#000" stroke-width="1.3" fill="none"/>
<text x="1585.60" y="860.20" font-size="11.0" text-anchor="start" fill="#111111" textLength="9.02" lengthAdjust="spacingAndGlyphs">I1</text>
<path d="M1567.90,875.50L1577.40,875.50" stroke="#000" stroke-width="1.3" fill="none"/>
<text x="1585.60" y="879.20" font-size="11.0" text-anchor="start" fill="#111111" textLength="9.02" lengthAdjust="spacingAndGlyphs">I2</text>
<path d="M1567.90,894.50L1577.40,894.50" stroke="#000" stroke-width="1.3" fill="none"/>
<text x="1585.60" y="898.20" font-size="11.0" text-anchor="start" fill="#111111" textLength="9.02" lengthAdjust="spacingAndGlyphs">I3</text>
<path d="M1634.90,856.50L1644.20,856.50" stroke="#000" stroke-width="1.3" fill="none"/>
<text x="1625.60" y="860.20" font-size="11.0" text-anchor="end" fill="#111111">O</text>
<text x="1606.45" y="820.70" font-size="13.6" text-anchor="middle" fill="#111111" textLength="123.27" lengthAdjust="spacingAndGlyphs">y_v_OBUF[0]_inst_i_1</text>
<text x="1606.45" y="916.90" font-size="13.6" text-anchor="middle" fill="#111111" textLength="30.24" lengthAdjust="spacingAndGlyphs">LUT4</text>
<rect x="1577.40" y="951.50" width="57.50" height="57.00" fill="#ffffd2" stroke="#000" stroke-width="1.3"/>
<path d="M1567.90,960.50L1577.40,960.50" stroke="#000" stroke-width="1.3" fill="none"/>
<text x="1585.60" y="964.20" font-size="11.0" text-anchor="start" fill="#111111" textLength="9.02" lengthAdjust="spacingAndGlyphs">I0</text>
<path d="M1567.90,979.50L1577.40,979.50" stroke="#000" stroke-width="1.3" fill="none"/>
<text x="1585.60" y="983.20" font-size="11.0" text-anchor="start" fill="#111111" textLength="9.02" lengthAdjust="spacingAndGlyphs">I1</text>
<path d="M1567.90,998.50L1577.40,998.50" stroke="#000" stroke-width="1.3" fill="none"/>
<text x="1585.60" y="1002.20" font-size="11.0" text-anchor="start" fill="#111111" textLength="9.02" lengthAdjust="spacingAndGlyphs">I2</text>
<path d="M1634.90,979.50L1644.20,979.50" stroke="#000" stroke-width="1.3" fill="none"/>
<text x="1625.60" y="983.20" font-size="11.0" text-anchor="end" fill="#111111">O</text>
<text x="1606.45" y="944.70" font-size="13.6" text-anchor="middle" fill="#111111" textLength="123.27" lengthAdjust="spacingAndGlyphs">y_v_OBUF[1]_inst_i_1</text>
<text x="1606.45" y="1021.90" font-size="13.6" text-anchor="middle" fill="#111111" textLength="30.24" lengthAdjust="spacingAndGlyphs">LUT3</text>
<rect x="1577.40" y="1055.50" width="57.50" height="38.00" fill="#ffffd2" stroke="#000" stroke-width="1.3"/>
<path d="M1567.90,1065.50L1577.40,1065.50" stroke="#000" stroke-width="1.3" fill="none"/>
<text x="1585.60" y="1069.20" font-size="11.0" text-anchor="start" fill="#111111" textLength="9.02" lengthAdjust="spacingAndGlyphs">I0</text>
<path d="M1567.90,1084.50L1577.40,1084.50" stroke="#000" stroke-width="1.3" fill="none"/>
<text x="1585.60" y="1088.20" font-size="11.0" text-anchor="start" fill="#111111" textLength="9.02" lengthAdjust="spacingAndGlyphs">I1</text>
<path d="M1634.90,1065.50L1644.20,1065.50" stroke="#000" stroke-width="1.3" fill="none"/>
<text x="1625.60" y="1069.20" font-size="11.0" text-anchor="end" fill="#111111">O</text>
<text x="1606.45" y="1048.70" font-size="13.6" text-anchor="middle" fill="#111111" textLength="123.27" lengthAdjust="spacingAndGlyphs">y_v_OBUF[2]_inst_i_1</text>
<text x="1606.45" y="1106.90" font-size="13.6" text-anchor="middle" fill="#111111" textLength="30.24" lengthAdjust="spacingAndGlyphs">LUT2</text>
<text x="1595.90" y="792.80" font-size="13.6" text-anchor="middle" fill="#111111">V</text>
<text x="1596.20" y="1135.80" font-size="13.6" text-anchor="middle" fill="#111111" textLength="55.40" lengthAdjust="spacingAndGlyphs">priority_v</text>
<rect x="1467.00" y="802.00" width="14" height="14" rx="2.8" fill="#334f87"/>
<rect x="1470.80" y="808.00" width="6.5" height="2.1" fill="#fff"/>
<text x="1455.20" y="832.10" font-size="11.0" text-anchor="end" fill="#111111" textLength="65.64" lengthAdjust="spacingAndGlyphs">a_v_IBUF[2:0]</text>
<text x="1455.00" y="889.80" font-size="11.0" text-anchor="end" fill="#111111" textLength="28.44" lengthAdjust="spacingAndGlyphs">y_v[0]</text>
<text x="1736.80" y="851.80" font-size="11.0" text-anchor="start" fill="#111111" textLength="70.39" lengthAdjust="spacingAndGlyphs">y_v_OBUF[2:0]</text>
<path d="M1090.50,698.50L1112.00,698.50" stroke="#1cb400" stroke-width="1.25" fill="none" stroke-linejoin="miter" stroke-linecap="butt"/>
<path d="M1158.40,698.50L1283.50,698.50" stroke="#1cb400" stroke-width="1.25" fill="none" stroke-linejoin="miter" stroke-linecap="butt"/>
<path d="M1090.50,764.50L1112.00,764.50" stroke="#1cb400" stroke-width="1.25" fill="none" stroke-linejoin="miter" stroke-linecap="butt"/>
<path d="M1158.40,764.50L1283.50,764.50" stroke="#1cb400" stroke-width="1.25" fill="none" stroke-linejoin="miter" stroke-linecap="butt"/>
<path d="M1090.50,831.50L1112.00,831.50" stroke="#1cb400" stroke-width="1.25" fill="none" stroke-linejoin="miter" stroke-linecap="butt"/>
<path d="M1158.40,831.50L1283.50,831.50" stroke="#1cb400" stroke-width="1.25" fill="none" stroke-linejoin="miter" stroke-linecap="butt"/>
<path d="M1090.50,897.50L1112.00,897.50" stroke="#1cb400" stroke-width="1.25" fill="none" stroke-linejoin="miter" stroke-linecap="butt"/>
<path d="M1158.40,897.50L1272.50,897.50L1272.50,1691.50L1929.50,1691.50L1929.50,897.50L1957.80,897.50" stroke="#1cb400" stroke-width="1.25" fill="none" stroke-linejoin="miter" stroke-linecap="butt"/>
<path d="M1272.50,1424.50L1567.90,1424.50" stroke="#1cb400" stroke-width="1.25" fill="none" stroke-linejoin="miter" stroke-linecap="butt"/>
<rect x="1270.00" y="1422.00" width="5" height="5" fill="#1cb400"/>
<path d="M1491.50,1424.50L1491.50,1615.50L1567.90,1615.50" stroke="#1cb400" stroke-width="1.25" fill="none" stroke-linejoin="miter" stroke-linecap="butt"/>
<path d="M1491.50,1529.50L1567.90,1529.50" stroke="#1cb400" stroke-width="1.25" fill="none" stroke-linejoin="miter" stroke-linecap="butt"/>
<rect x="1489.00" y="1422.00" width="5" height="5" fill="#1cb400"/>
<rect x="1489.00" y="1527.00" width="5" height="5" fill="#1cb400"/>
<path d="M1518.50,1367.50L1567.90,1367.50" stroke="#1cb400" stroke-width="1.25" fill="none" stroke-linejoin="miter" stroke-linecap="butt"/>
<path d="M1518.50,1386.50L1567.90,1386.50" stroke="#1cb400" stroke-width="1.25" fill="none" stroke-linejoin="miter" stroke-linecap="butt"/>
<path d="M1518.50,1405.50L1567.90,1405.50" stroke="#1cb400" stroke-width="1.25" fill="none" stroke-linejoin="miter" stroke-linecap="butt"/>
<path d="M1518.50,1491.50L1567.90,1491.50" stroke="#1cb400" stroke-width="1.25" fill="none" stroke-linejoin="miter" stroke-linecap="butt"/>
<path d="M1518.50,1510.50L1567.90,1510.50" stroke="#1cb400" stroke-width="1.25" fill="none" stroke-linejoin="miter" stroke-linecap="butt"/>
<path d="M1518.50,1596.50L1567.90,1596.50" stroke="#1cb400" stroke-width="1.25" fill="none" stroke-linejoin="miter" stroke-linecap="butt"/>
<path d="M1644.20,1386.50L1692.50,1386.50" stroke="#1cb400" stroke-width="1.25" fill="none" stroke-linejoin="miter" stroke-linecap="butt"/>
<path d="M1644.20,1510.50L1692.50,1510.50" stroke="#1cb400" stroke-width="1.25" fill="none" stroke-linejoin="miter" stroke-linecap="butt"/>
<path d="M1644.20,1596.50L1692.50,1596.50" stroke="#1cb400" stroke-width="1.25" fill="none" stroke-linejoin="miter" stroke-linecap="butt"/>
<path d="M1918.50,698.50L1957.80,698.50" stroke="#1cb400" stroke-width="1.25" fill="none" stroke-linejoin="miter" stroke-linecap="butt"/>
<path d="M1918.50,764.50L1957.80,764.50" stroke="#1cb400" stroke-width="1.25" fill="none" stroke-linejoin="miter" stroke-linecap="butt"/>
<path d="M1918.50,831.50L1957.80,831.50" stroke="#1cb400" stroke-width="1.25" fill="none" stroke-linejoin="miter" stroke-linecap="butt"/>
<path d="M2005.20,698.50L2111.50,698.50" stroke="#1cb400" stroke-width="1.25" fill="none" stroke-linejoin="miter" stroke-linecap="butt"/>
<path d="M2005.20,764.50L2111.50,764.50" stroke="#1cb400" stroke-width="1.25" fill="none" stroke-linejoin="miter" stroke-linecap="butt"/>
<path d="M2005.20,831.50L2111.50,831.50" stroke="#1cb400" stroke-width="1.25" fill="none" stroke-linejoin="miter" stroke-linecap="butt"/>
<path d="M2005.20,897.50L2111.50,897.50" stroke="#1cb400" stroke-width="1.25" fill="none" stroke-linejoin="miter" stroke-linecap="butt"/>
<path d="M1063.00,698.50L1082.50,698.50" stroke="#047f04" stroke-width="3.0" fill="none" stroke-linejoin="miter" stroke-linecap="butt"/>
<path d="M1082.50,697.00L1082.50,897.50" stroke="#047f04" stroke-width="3.0" fill="none" stroke-linejoin="miter" stroke-linecap="butt"/>
<path d="M1291.50,697.00L1291.50,1367.50L1510.50,1367.50" stroke="#047f04" stroke-width="3.0" fill="none" stroke-linejoin="miter" stroke-linecap="butt"/>
<path d="M1510.50,1366.00L1510.50,1596.50" stroke="#047f04" stroke-width="3.0" fill="none" stroke-linejoin="miter" stroke-linecap="butt"/>
<path d="M1700.50,1596.50L1700.50,1386.50L1910.50,1386.50L1910.50,697.00" stroke="#047f04" stroke-width="3.0" fill="none" stroke-linejoin="miter" stroke-linecap="butt"/>
<path d="M2119.50,897.50L2119.50,697.00" stroke="#047f04" stroke-width="3.0" fill="none" stroke-linejoin="miter" stroke-linecap="butt"/>
<path d="M2119.50,698.50L2138.00,698.50" stroke="#047f04" stroke-width="3.0" fill="none" stroke-linejoin="miter" stroke-linecap="butt"/>
<path d="M1452.90,1367.50L1471.90,1367.50" stroke="#000" stroke-width="3" fill="none"/>
<path d="M1452.90,1424.50L1471.90,1424.50" stroke="#000" stroke-width="3" fill="none"/>
<path d="M1719.10,1386.50L1738.10,1386.50" stroke="#000" stroke-width="3" fill="none"/>
<path d="M1081.00,693.25L1091.10,698.50L1081.00,703.75Z" fill="#000"/>
<path d="M2121.00,693.25L2110.90,698.50L2121.00,703.75Z" fill="#000"/>
<text x="1092.90" y="695.00" font-size="9.5" text-anchor="start" fill="#444444">0</text>
<text x="2109.10" y="695.00" font-size="9.5" text-anchor="end" fill="#444444">0</text>
<path d="M1081.00,759.25L1091.10,764.50L1081.00,769.75Z" fill="#000"/>
<path d="M2121.00,759.25L2110.90,764.50L2121.00,769.75Z" fill="#000"/>
<text x="1092.90" y="761.00" font-size="9.5" text-anchor="start" fill="#444444">1</text>
<text x="2109.10" y="761.00" font-size="9.5" text-anchor="end" fill="#444444">1</text>
<path d="M1081.00,826.25L1091.10,831.50L1081.00,836.75Z" fill="#000"/>
<path d="M2121.00,826.25L2110.90,831.50L2121.00,836.75Z" fill="#000"/>
<text x="1092.90" y="828.00" font-size="9.5" text-anchor="start" fill="#444444">2</text>
<text x="2109.10" y="828.00" font-size="9.5" text-anchor="end" fill="#444444">2</text>
<path d="M1081.00,892.25L1091.10,897.50L1081.00,902.75Z" fill="#000"/>
<path d="M2121.00,892.25L2110.90,897.50L2121.00,902.75Z" fill="#000"/>
<text x="1092.90" y="894.00" font-size="9.5" text-anchor="start" fill="#444444">3</text>
<text x="2109.10" y="894.00" font-size="9.5" text-anchor="end" fill="#444444">3</text>
<path d="M1293.00,693.25L1282.90,698.50L1293.00,703.75Z" fill="#000"/>
<text x="1281.90" y="695.00" font-size="9.5" text-anchor="end" fill="#444444">0</text>
<path d="M1909.00,693.25L1919.10,698.50L1909.00,703.75Z" fill="#000"/>
<text x="1919.90" y="695.00" font-size="9.5" text-anchor="start" fill="#444444">0</text>
<path d="M1293.00,759.25L1282.90,764.50L1293.00,769.75Z" fill="#000"/>
<text x="1281.90" y="761.00" font-size="9.5" text-anchor="end" fill="#444444">1</text>
<path d="M1909.00,759.25L1919.10,764.50L1909.00,769.75Z" fill="#000"/>
<text x="1919.90" y="761.00" font-size="9.5" text-anchor="start" fill="#444444">1</text>
<path d="M1293.00,826.25L1282.90,831.50L1293.00,836.75Z" fill="#000"/>
<text x="1281.90" y="828.00" font-size="9.5" text-anchor="end" fill="#444444">2</text>
<path d="M1909.00,826.25L1919.10,831.50L1909.00,836.75Z" fill="#000"/>
<text x="1919.90" y="828.00" font-size="9.5" text-anchor="start" fill="#444444">2</text>
<path d="M1509.00,1362.25L1519.10,1367.50L1509.00,1372.75Z" fill="#000"/>
<text x="1521.00" y="1363.90" font-size="9.5" text-anchor="start" fill="#444444">2</text>
<path d="M1509.00,1381.25L1519.10,1386.50L1509.00,1391.75Z" fill="#000"/>
<text x="1521.00" y="1382.90" font-size="9.5" text-anchor="start" fill="#444444">0</text>
<path d="M1509.00,1400.25L1519.10,1405.50L1509.00,1410.75Z" fill="#000"/>
<text x="1521.00" y="1401.90" font-size="9.5" text-anchor="start" fill="#444444">1</text>
<path d="M1509.00,1486.25L1519.10,1491.50L1509.00,1496.75Z" fill="#000"/>
<text x="1521.00" y="1487.90" font-size="9.5" text-anchor="start" fill="#444444">2</text>
<path d="M1509.00,1505.25L1519.10,1510.50L1509.00,1515.75Z" fill="#000"/>
<text x="1521.00" y="1506.90" font-size="9.5" text-anchor="start" fill="#444444">1</text>
<path d="M1509.00,1591.25L1519.10,1596.50L1509.00,1601.75Z" fill="#000"/>
<text x="1521.00" y="1592.90" font-size="9.5" text-anchor="start" fill="#444444">2</text>
<path d="M1702.00,1381.25L1691.90,1386.50L1702.00,1391.75Z" fill="#000"/>
<text x="1690.70" y="1382.90" font-size="9.5" text-anchor="end" fill="#444444">0</text>
<path d="M1702.00,1505.25L1691.90,1510.50L1702.00,1515.75Z" fill="#000"/>
<text x="1690.70" y="1506.90" font-size="9.5" text-anchor="end" fill="#444444">1</text>
<path d="M1702.00,1591.25L1691.90,1596.50L1702.00,1601.75Z" fill="#000"/>
<text x="1690.70" y="1592.90" font-size="9.5" text-anchor="end" fill="#444444">2</text>
<path d="M1043.45,691.40L1056.85,691.40L1062.65,698.50L1056.85,705.60L1043.45,705.60Z" fill="#fff" stroke="#000" stroke-width="2.9" stroke-linejoin="miter"/>
<text x="1031.80" y="703.10" font-size="13.6" text-anchor="end" fill="#111111" textLength="61.20" lengthAdjust="spacingAndGlyphs">a_vhd[3:0]</text>
<path d="M2138.75,691.40L2152.15,691.40L2157.95,698.50L2152.15,705.60L2138.75,705.60Z" fill="#fff" stroke="#000" stroke-width="2.9" stroke-linejoin="miter"/>
<text x="2169.30" y="703.10" font-size="13.6" text-anchor="start" fill="#111111" textLength="60.53" lengthAdjust="spacingAndGlyphs">y_vhd[3:0]</text>
<path d="M1112.00,698.50L1120.40,698.50" stroke="#000" stroke-width="1.3" fill="none"/>
<path d="M1148.40,698.50L1158.40,698.50" stroke="#000" stroke-width="1.3" fill="none"/>
<path d="M1120.85,687.90L1148.80,698.50L1120.85,709.10Z" fill="#ffffd2" stroke="#000" stroke-width="1.2" stroke-linejoin="miter"/>
<text x="1109.20" y="693.90" font-size="11.0" text-anchor="start" fill="#111111">I</text>
<text x="1155.90" y="694.00" font-size="11.0" text-anchor="start" fill="#111111">O</text>
<text x="1129.00" y="680.90" font-size="13.6" text-anchor="start" fill="#111111" textLength="111.26" lengthAdjust="spacingAndGlyphs">a_vhd_IBUF[0]_inst</text>
<text x="1129.00" y="723.00" font-size="13.6" text-anchor="start" fill="#111111" textLength="27.68" lengthAdjust="spacingAndGlyphs">IBUF</text>
<path d="M1957.80,698.50L1967.20,698.50" stroke="#000" stroke-width="1.3" fill="none"/>
<path d="M1995.20,698.50L2005.20,698.50" stroke="#000" stroke-width="1.3" fill="none"/>
<path d="M1967.65,687.90L1995.60,698.50L1967.65,709.10Z" fill="#ffffd2" stroke="#000" stroke-width="1.2" stroke-linejoin="miter"/>
<text x="1956.00" y="693.90" font-size="11.0" text-anchor="start" fill="#111111">I</text>
<text x="2002.70" y="694.00" font-size="11.0" text-anchor="start" fill="#111111">O</text>
<text x="1975.80" y="680.90" font-size="13.6" text-anchor="start" fill="#111111" textLength="116.97" lengthAdjust="spacingAndGlyphs">y_vhd_OBUF[0]_inst</text>
<text x="1975.80" y="723.00" font-size="13.6" text-anchor="start" fill="#111111" textLength="34.05" lengthAdjust="spacingAndGlyphs">OBUF</text>
<path d="M1112.00,764.50L1120.40,764.50" stroke="#000" stroke-width="1.3" fill="none"/>
<path d="M1148.40,764.50L1158.40,764.50" stroke="#000" stroke-width="1.3" fill="none"/>
<path d="M1120.85,753.90L1148.80,764.50L1120.85,775.10Z" fill="#ffffd2" stroke="#000" stroke-width="1.2" stroke-linejoin="miter"/>
<text x="1109.20" y="759.90" font-size="11.0" text-anchor="start" fill="#111111">I</text>
<text x="1155.90" y="760.00" font-size="11.0" text-anchor="start" fill="#111111">O</text>
<text x="1129.00" y="746.90" font-size="13.6" text-anchor="start" fill="#111111" textLength="111.26" lengthAdjust="spacingAndGlyphs">a_vhd_IBUF[1]_inst</text>
<text x="1129.00" y="789.00" font-size="13.6" text-anchor="start" fill="#111111" textLength="27.68" lengthAdjust="spacingAndGlyphs">IBUF</text>
<path d="M1957.80,764.50L1967.20,764.50" stroke="#000" stroke-width="1.3" fill="none"/>
<path d="M1995.20,764.50L2005.20,764.50" stroke="#000" stroke-width="1.3" fill="none"/>
<path d="M1967.65,753.90L1995.60,764.50L1967.65,775.10Z" fill="#ffffd2" stroke="#000" stroke-width="1.2" stroke-linejoin="miter"/>
<text x="1956.00" y="759.90" font-size="11.0" text-anchor="start" fill="#111111">I</text>
<text x="2002.70" y="760.00" font-size="11.0" text-anchor="start" fill="#111111">O</text>
<text x="1975.80" y="746.90" font-size="13.6" text-anchor="start" fill="#111111" textLength="116.97" lengthAdjust="spacingAndGlyphs">y_vhd_OBUF[1]_inst</text>
<text x="1975.80" y="789.00" font-size="13.6" text-anchor="start" fill="#111111" textLength="34.05" lengthAdjust="spacingAndGlyphs">OBUF</text>
<path d="M1112.00,831.50L1120.40,831.50" stroke="#000" stroke-width="1.3" fill="none"/>
<path d="M1148.40,831.50L1158.40,831.50" stroke="#000" stroke-width="1.3" fill="none"/>
<path d="M1120.85,820.90L1148.80,831.50L1120.85,842.10Z" fill="#ffffd2" stroke="#000" stroke-width="1.2" stroke-linejoin="miter"/>
<text x="1109.20" y="826.90" font-size="11.0" text-anchor="start" fill="#111111">I</text>
<text x="1155.90" y="827.00" font-size="11.0" text-anchor="start" fill="#111111">O</text>
<text x="1129.00" y="813.90" font-size="13.6" text-anchor="start" fill="#111111" textLength="111.26" lengthAdjust="spacingAndGlyphs">a_vhd_IBUF[2]_inst</text>
<text x="1129.00" y="856.00" font-size="13.6" text-anchor="start" fill="#111111" textLength="27.68" lengthAdjust="spacingAndGlyphs">IBUF</text>
<path d="M1957.80,831.50L1967.20,831.50" stroke="#000" stroke-width="1.3" fill="none"/>
<path d="M1995.20,831.50L2005.20,831.50" stroke="#000" stroke-width="1.3" fill="none"/>
<path d="M1967.65,820.90L1995.60,831.50L1967.65,842.10Z" fill="#ffffd2" stroke="#000" stroke-width="1.2" stroke-linejoin="miter"/>
<text x="1956.00" y="826.90" font-size="11.0" text-anchor="start" fill="#111111">I</text>
<text x="2002.70" y="827.00" font-size="11.0" text-anchor="start" fill="#111111">O</text>
<text x="1975.80" y="813.90" font-size="13.6" text-anchor="start" fill="#111111" textLength="116.97" lengthAdjust="spacingAndGlyphs">y_vhd_OBUF[2]_inst</text>
<text x="1975.80" y="856.00" font-size="13.6" text-anchor="start" fill="#111111" textLength="34.05" lengthAdjust="spacingAndGlyphs">OBUF</text>
<path d="M1112.00,897.50L1120.40,897.50" stroke="#000" stroke-width="1.3" fill="none"/>
<path d="M1148.40,897.50L1158.40,897.50" stroke="#000" stroke-width="1.3" fill="none"/>
<path d="M1120.85,886.90L1148.80,897.50L1120.85,908.10Z" fill="#ffffd2" stroke="#000" stroke-width="1.2" stroke-linejoin="miter"/>
<text x="1109.20" y="892.90" font-size="11.0" text-anchor="start" fill="#111111">I</text>
<text x="1155.90" y="893.00" font-size="11.0" text-anchor="start" fill="#111111">O</text>
<text x="1129.00" y="879.90" font-size="13.6" text-anchor="start" fill="#111111" textLength="111.26" lengthAdjust="spacingAndGlyphs">a_vhd_IBUF[3]_inst</text>
<text x="1129.00" y="922.00" font-size="13.6" text-anchor="start" fill="#111111" textLength="27.68" lengthAdjust="spacingAndGlyphs">IBUF</text>
<path d="M1957.80,897.50L1967.20,897.50" stroke="#000" stroke-width="1.3" fill="none"/>
<path d="M1995.20,897.50L2005.20,897.50" stroke="#000" stroke-width="1.3" fill="none"/>
<path d="M1967.65,886.90L1995.60,897.50L1967.65,908.10Z" fill="#ffffd2" stroke="#000" stroke-width="1.2" stroke-linejoin="miter"/>
<text x="1956.00" y="892.90" font-size="11.0" text-anchor="start" fill="#111111">I</text>
<text x="2002.70" y="893.00" font-size="11.0" text-anchor="start" fill="#111111">O</text>
<text x="1975.80" y="879.90" font-size="13.6" text-anchor="start" fill="#111111" textLength="116.97" lengthAdjust="spacingAndGlyphs">y_vhd_OBUF[3]_inst</text>
<text x="1975.80" y="922.00" font-size="13.6" text-anchor="start" fill="#111111" textLength="34.05" lengthAdjust="spacingAndGlyphs">OBUF</text>
<rect x="1577.40" y="1358.50" width="57.50" height="76.00" fill="#ffffd2" stroke="#000" stroke-width="1.3"/>
<path d="M1567.90,1367.50L1577.40,1367.50" stroke="#000" stroke-width="1.3" fill="none"/>
<text x="1585.60" y="1371.20" font-size="11.0" text-anchor="start" fill="#111111" textLength="9.02" lengthAdjust="spacingAndGlyphs">I0</text>
<path d="M1567.90,1386.50L1577.40,1386.50" stroke="#000" stroke-width="1.3" fill="none"/>
<text x="1585.60" y="1390.20" font-size="11.0" text-anchor="start" fill="#111111" textLength="9.02" lengthAdjust="spacingAndGlyphs">I1</text>
<path d="M1567.90,1405.50L1577.40,1405.50" stroke="#000" stroke-width="1.3" fill="none"/>
<text x="1585.60" y="1409.20" font-size="11.0" text-anchor="start" fill="#111111" textLength="9.02" lengthAdjust="spacingAndGlyphs">I2</text>
<path d="M1567.90,1424.50L1577.40,1424.50" stroke="#000" stroke-width="1.3" fill="none"/>
<text x="1585.60" y="1428.20" font-size="11.0" text-anchor="start" fill="#111111" textLength="9.02" lengthAdjust="spacingAndGlyphs">I3</text>
<path d="M1634.90,1386.50L1644.20,1386.50" stroke="#000" stroke-width="1.3" fill="none"/>
<text x="1625.60" y="1390.20" font-size="11.0" text-anchor="end" fill="#111111">O</text>
<text x="1606.45" y="1351.70" font-size="13.6" text-anchor="middle" fill="#111111" textLength="138.91" lengthAdjust="spacingAndGlyphs">y_vhd_OBUF[0]_inst_i_1</text>
<text x="1606.45" y="1447.90" font-size="13.6" text-anchor="middle" fill="#111111" textLength="30.24" lengthAdjust="spacingAndGlyphs">LUT4</text>
<rect x="1577.40" y="1482.50" width="57.50" height="57.00" fill="#ffffd2" stroke="#000" stroke-width="1.3"/>
<path d="M1567.90,1491.50L1577.40,1491.50" stroke="#000" stroke-width="1.3" fill="none"/>
<text x="1585.60" y="1495.20" font-size="11.0" text-anchor="start" fill="#111111" textLength="9.02" lengthAdjust="spacingAndGlyphs">I0</text>
<path d="M1567.90,1510.50L1577.40,1510.50" stroke="#000" stroke-width="1.3" fill="none"/>
<text x="1585.60" y="1514.20" font-size="11.0" text-anchor="start" fill="#111111" textLength="9.02" lengthAdjust="spacingAndGlyphs">I1</text>
<path d="M1567.90,1529.50L1577.40,1529.50" stroke="#000" stroke-width="1.3" fill="none"/>
<text x="1585.60" y="1533.20" font-size="11.0" text-anchor="start" fill="#111111" textLength="9.02" lengthAdjust="spacingAndGlyphs">I2</text>
<path d="M1634.90,1510.50L1644.20,1510.50" stroke="#000" stroke-width="1.3" fill="none"/>
<text x="1625.60" y="1514.20" font-size="11.0" text-anchor="end" fill="#111111">O</text>
<text x="1606.45" y="1475.70" font-size="13.6" text-anchor="middle" fill="#111111" textLength="138.91" lengthAdjust="spacingAndGlyphs">y_vhd_OBUF[1]_inst_i_1</text>
<text x="1606.45" y="1552.90" font-size="13.6" text-anchor="middle" fill="#111111" textLength="30.24" lengthAdjust="spacingAndGlyphs">LUT3</text>
<rect x="1577.40" y="1586.50" width="57.50" height="38.00" fill="#ffffd2" stroke="#000" stroke-width="1.3"/>
<path d="M1567.90,1596.50L1577.40,1596.50" stroke="#000" stroke-width="1.3" fill="none"/>
<text x="1585.60" y="1600.20" font-size="11.0" text-anchor="start" fill="#111111" textLength="9.02" lengthAdjust="spacingAndGlyphs">I0</text>
<path d="M1567.90,1615.50L1577.40,1615.50" stroke="#000" stroke-width="1.3" fill="none"/>
<text x="1585.60" y="1619.20" font-size="11.0" text-anchor="start" fill="#111111" textLength="9.02" lengthAdjust="spacingAndGlyphs">I1</text>
<path d="M1634.90,1596.50L1644.20,1596.50" stroke="#000" stroke-width="1.3" fill="none"/>
<text x="1625.60" y="1600.20" font-size="11.0" text-anchor="end" fill="#111111">O</text>
<text x="1606.45" y="1579.70" font-size="13.6" text-anchor="middle" fill="#111111" textLength="138.91" lengthAdjust="spacingAndGlyphs">y_vhd_OBUF[2]_inst_i_1</text>
<text x="1606.45" y="1637.90" font-size="13.6" text-anchor="middle" fill="#111111" textLength="30.24" lengthAdjust="spacingAndGlyphs">LUT2</text>
<text x="1595.90" y="1323.80" font-size="13.6" text-anchor="middle" fill="#111111" textLength="32.91" lengthAdjust="spacingAndGlyphs">VHDL</text>
<text x="1596.20" y="1666.80" font-size="13.6" text-anchor="middle" fill="#111111" textLength="71.04" lengthAdjust="spacingAndGlyphs">priority_vhd</text>
<rect x="1467.00" y="1333.00" width="14" height="14" rx="2.8" fill="#334f87"/>
<rect x="1470.80" y="1339.00" width="6.5" height="2.1" fill="#fff"/>
<text x="1455.20" y="1362.10" font-size="11.0" text-anchor="end" fill="#111111" textLength="78.64" lengthAdjust="spacingAndGlyphs">a_vhd_IBUF[2:0]</text>
<text x="1455.00" y="1419.80" font-size="11.0" text-anchor="end" fill="#111111" textLength="41.44" lengthAdjust="spacingAndGlyphs">y_vhd[0]</text>
<text x="1736.80" y="1381.80" font-size="11.0" text-anchor="start" fill="#111111" textLength="83.39" lengthAdjust="spacingAndGlyphs">y_vhd_OBUF[2:0]</text>
</g>
</svg>
</body></html>
